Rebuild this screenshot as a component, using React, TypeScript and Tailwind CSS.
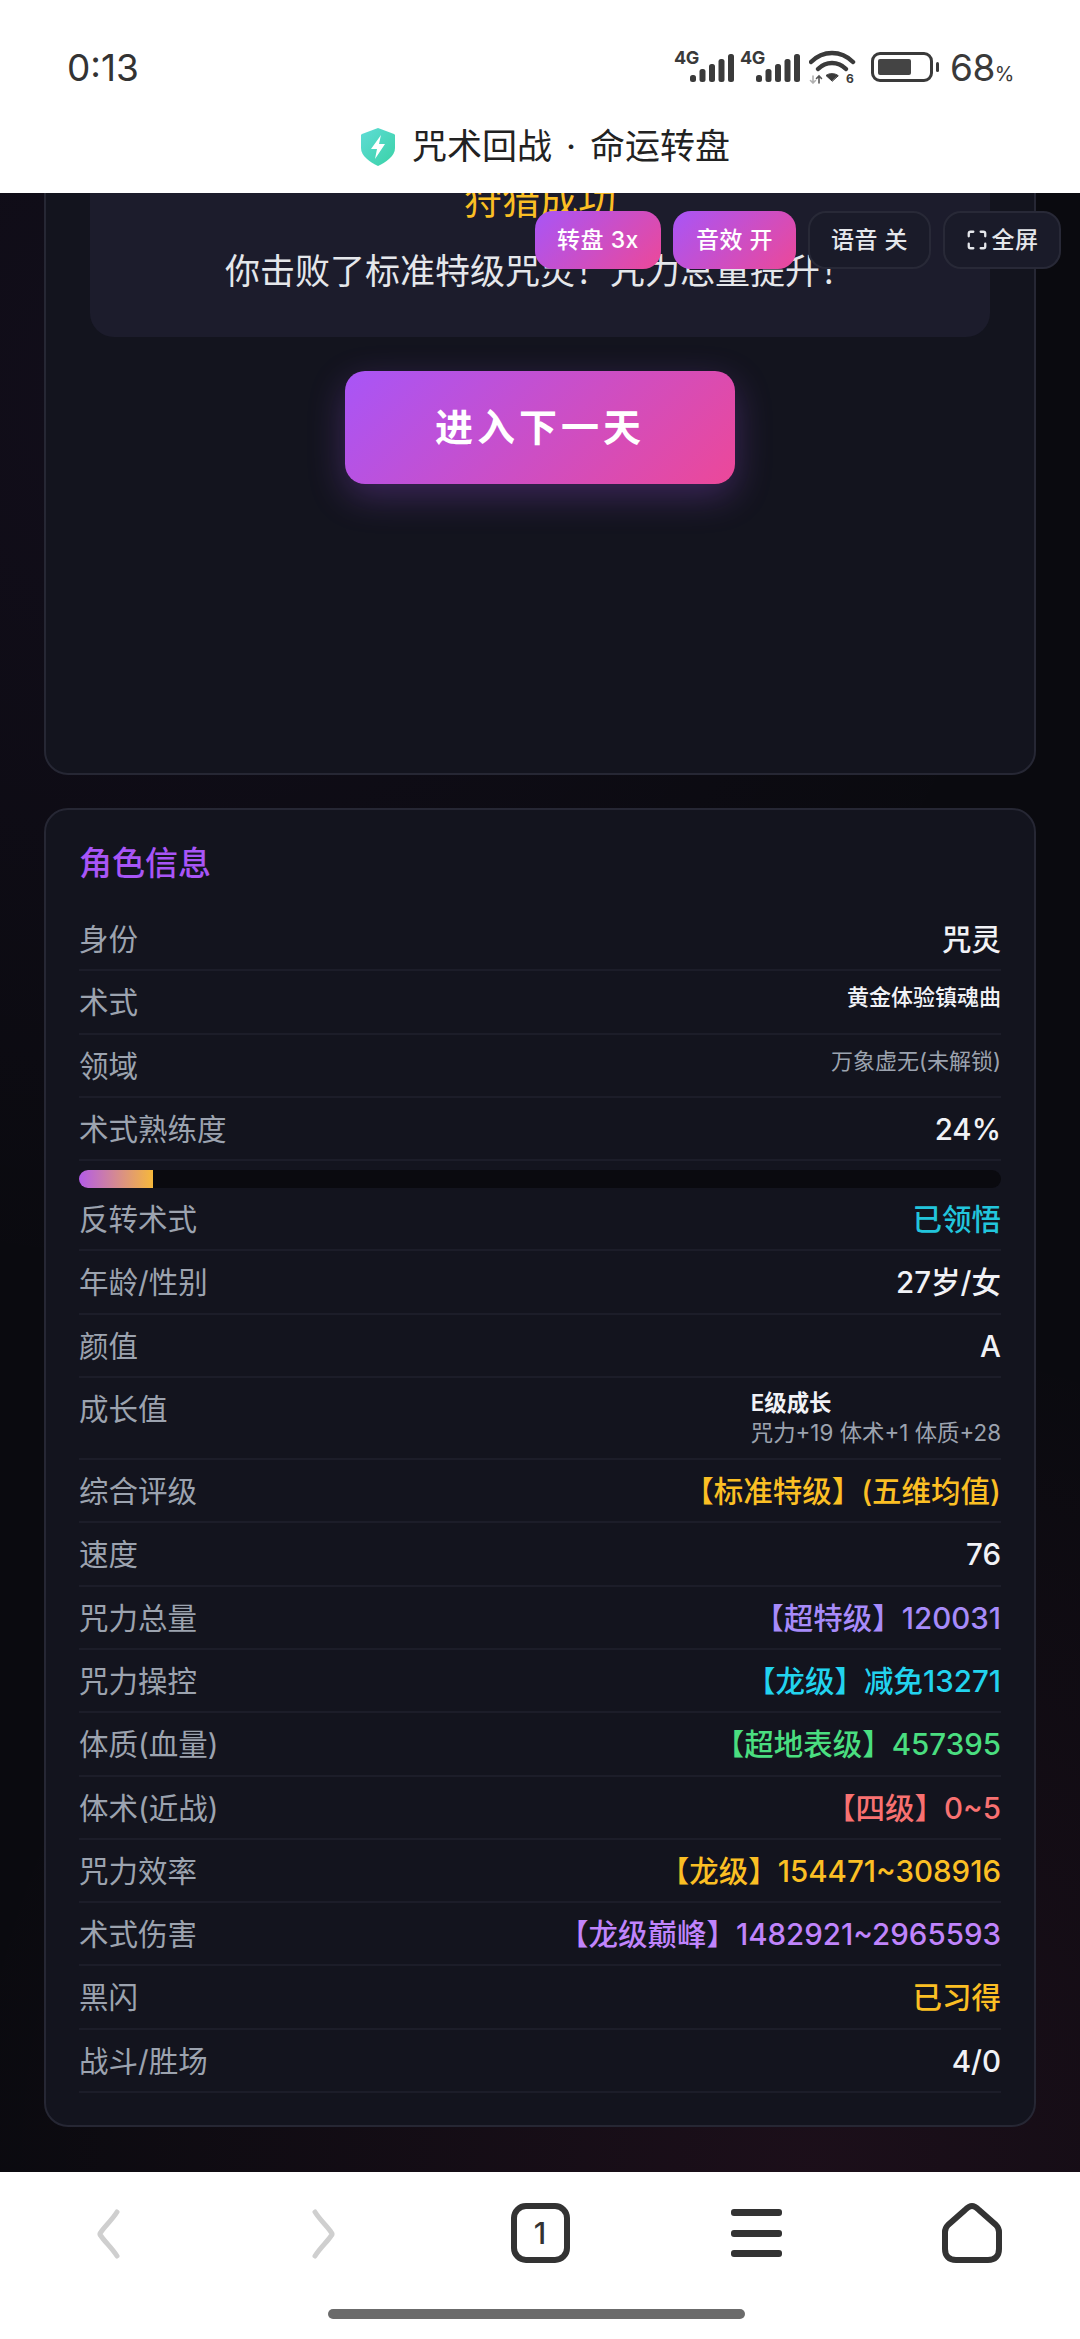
import React from "react";
import { Maximize } from "lucide-react";

type Row = { label: string; value: string; color?: string; size?: string };

const rowsA: Row[] = [
  { label: "身份", value: "咒灵" },
  { label: "术式", value: "黄金体验镇魂曲", size: "text-[22px]" },
  { label: "领域", value: "万象虚无(未解锁)", size: "text-[22px]", color: "text-[#9ca3af] font-normal" },
  { label: "术式熟练度", value: "24%" },
];
const rowsB: Row[] = [
  { label: "反转术式", value: "已领悟", color: "text-[#22c5dc]" },
  { label: "年龄/性别", value: "27岁/女" },
  { label: "颜值", value: "A" },
];
const rowsC: Row[] = [
  { label: "综合评级", value: "【标准特级】(五维均值)", color: "text-[#fbbf24]" },
  { label: "速度", value: "76" },
  { label: "咒力总量", value: "【超特级】120031", color: "text-[#a78bfa]" },
  { label: "咒力操控", value: "【龙级】减免13271", color: "text-[#22d3ee]" },
  { label: "体质(血量)", value: "【超地表级】457395", color: "text-[#4ade80]" },
  { label: "体术(近战)", value: "【四级】0~5", color: "text-[#f87171]" },
  { label: "咒力效率", value: "【龙级】154471~308916", color: "text-[#fbbf24]" },
  { label: "术式伤害", value: "【龙级巅峰】1482921~2965593", color: "text-[#c084fc]" },
  { label: "黑闪", value: "已习得", color: "text-[#fbbf24]" },
  { label: "战斗/胜场", value: "4/0" },
];

function InfoRow({ label, value, color, size }: Row) {
  return (
    <div className="flex items-start justify-between border-b-2 border-[#1c1d29] py-[10px] h-[63.3px]">
      <span className="text-[29.5px] leading-[42px] text-[#9ca3af]">{label}</span>
      <span className={`${size ?? "text-[29.5px] leading-[42px]"} ${size ? "leading-[33px]" : ""} font-medium ${color ?? "text-[#f1f2f6]"}`}>
        {value}
      </span>
    </div>
  );
}

function Bars() {
  return (
    <svg width="44" height="28" viewBox="0 0 44 28" className="absolute left-[16px] top-[3px]" fill="#3a3a3a">
      <rect x="0" y="21" width="6" height="7" rx="2.5" />
      <rect x="9.5" y="15" width="6" height="13" rx="2.5" />
      <rect x="19" y="10" width="6" height="18" rx="2.5" />
      <rect x="28.5" y="5" width="6" height="23" rx="2.5" />
      <rect x="38" y="0" width="6" height="28" rx="2.5" />
    </svg>
  );
}

function Signal() {
  return (
    <div className="relative w-[60px] h-[32px]">
      <span className="absolute left-0 -top-[3px] text-[18px] leading-[20px] font-bold text-[#3a3a3a] tracking-[-0.5px]">4G</span>
      <Bars />
    </div>
  );
}

function TopButton({ active, children, w }: { active?: boolean; children: React.ReactNode; w: string }) {
  return (
    <div
      className={`${w} h-[58px] rounded-[18px] flex items-center justify-center gap-[4px] text-[23px] font-medium tracking-[0.5px] ${
        active
          ? "bg-[linear-gradient(135deg,#a855f7,#ec4899)] text-white"
          : "bg-[#1a1b29] border-2 border-[#282937] text-[#e5e7eb]"
      }`}
    >
      {children}
    </div>
  );
}

export default function App() {
  return (
    <div className="relative w-[1080px] h-[2339px] flex flex-col overflow-hidden bg-white font-['Inter','Noto_Sans_CJK_SC',sans-serif]">
      {/* browser header */}
      <header className="h-[193px] shrink-0 bg-white flex flex-col">
        <div className="h-[127px] flex justify-between pl-[67px] pr-[66px] pt-[45px]">
          <span className="text-[37px] leading-[46px] text-[#333]">0:13</span>
          <div className="flex items-start pt-[6px] gap-[6px]">
            <Signal />
            <Signal />
            <svg width="48" height="34" viewBox="0 0 48 34" className="ml-[3px] -mt-[1px]" fill="none" stroke="#3a3a3a" strokeLinecap="round">
              <path d="M2 12 C14 0 32 0 44 12" strokeWidth="4.5" />
              <path d="M9 19 C17 11 29 11 37 19" strokeWidth="4.5" />
              <path d="M23 31 L17 25.5 C20 23 26 23 29 25.5 Z" fill="#3a3a3a" strokeWidth="1" />
              <path d="M4 26 V33 M1.5 30.5 L4 33 L6.5 30.5" stroke="#b0b0b0" strokeWidth="1.6" />
              <path d="M10 33 V26 M7.5 28.5 L10 26 L12.5 28.5" stroke="#555" strokeWidth="1.6" />
              <text x="37" y="33" fontSize="12" fontWeight="700" fill="#3a3a3a" stroke="none">6</text>
            </svg>
            <div className="ml-[8px] flex items-center gap-[3px] mt-[1px]">
              <div className="w-[62px] h-[30px] rounded-[9px] border-[3px] border-[#3a3a3a] p-[4px]">
                <div className="h-full w-[33px] bg-[#444] rounded-[2px]" />
              </div>
              <div className="w-[3px] h-[10px] bg-[#3a3a3a] rounded-[2px]" />
            </div>
            <span className="ml-[5px] -mt-[6px] text-[37px] leading-[46px] text-[#3a3a3a] tracking-[-0.5px]">
              68<span className="text-[20px]">%</span>
            </span>
          </div>
        </div>
        <div className="flex items-center justify-center gap-[17px] h-[39px] pl-[11px]">
          <svg width="34" height="38" viewBox="0 0 34 38">
            <defs>
              <linearGradient id="sh" x1="0" y1="0" x2="1" y2="1">
                <stop offset="0" stopColor="#5fdcd6" />
                <stop offset="1" stopColor="#3ad2a6" />
              </linearGradient>
            </defs>
            <path d="M17 0 L33 6 C34 6.5 34 7 34 8 V20 C34 28 25 34 17 38 C9 34 0 28 0 20 V8 C0 7 0 6.5 1 6 Z" fill="url(#sh)" />
            <path d="M20 7 L10 21 H16 L14 31 L24 16 H18 Z" fill="#fff" />
          </svg>
          <span className="text-[35px] leading-[39px] text-[#222]">
            咒术回战<span className="mx-[14px]">·</span>命运转盘
          </span>
        </div>
      </header>

      {/* page */}
      <main className="flex-1 min-h-0 overflow-hidden px-[44px] bg-[#0a0a0f] bg-[radial-gradient(circle_at_15%_10%,rgba(168,85,247,0.05),transparent_45%),radial-gradient(circle_at_75%_100%,rgba(236,72,153,0.08),transparent_40%)]">
        <section className="-mt-[60px] rounded-[24px] border-2 border-[#262734] bg-[#13141e] px-[44px] pt-[10px] pb-[289px]">
          <div className="rounded-[24px] bg-[#1c1c2c] pt-[27px] pb-[40px] flex flex-col items-center gap-[16px]">
            <div className="text-[38px] leading-[57px] text-[#fbbf24]">狩猎成功</div>
            <div className="text-[35px] leading-[52px] text-[#e5e7eb]">你击败了标准特级咒灵！咒力总量提升！</div>
          </div>
          <div className="mt-[34px] flex justify-center">
            <button className="w-[390px] h-[113px] rounded-[20px] bg-[linear-gradient(135deg,#a855f7,#ec4899)] text-white text-[38px] font-bold tracking-[4px] shadow-[0_12px_36px_rgba(168,85,247,0.28)]">
              进入下一天
            </button>
          </div>
        </section>

        <section className="mt-[33px] h-[1319px] rounded-[24px] border-2 border-[#262734] bg-[#13141e] px-[33px] pt-[31px]">
          <h2 className="text-[33px] leading-[44px] font-medium text-[#a855f7] mb-[23px]">角色信息</h2>
          {rowsA.map((r) => (
            <InfoRow key={r.label} {...r} />
          ))}
          <div className="mt-[9px] h-[18px] rounded-full bg-[#0a0a0f] overflow-hidden">
            <div className="h-full w-[74px] bg-[linear-gradient(90deg,#b35be8,#f6b83b)]" />
          </div>
          {rowsB.map((r) => (
            <InfoRow key={r.label} {...r} />
          ))}
          <div className="flex items-start justify-between border-b-2 border-[#1c1d29] pt-[10px] h-[82px]">
            <span className="text-[29.5px] leading-[42px] text-[#9ca3af]">成长值</span>
            <div className="text-[22.4px] leading-[30px]">
              <div className="font-semibold text-[#f1f2f6]">E级成长</div>
              <div className="text-[#9ca3af]">咒力+19 体术+1 体质+28</div>
            </div>
          </div>
          {rowsC.map((r) => (
            <InfoRow key={r.label} {...r} />
          ))}
        </section>
      </main>

      {/* floating controls */}
      <div className="absolute top-[211px] right-[19px] flex gap-[12px]">
        <TopButton active w="w-[126px]">转盘 3x</TopButton>
        <TopButton active w="w-[123px]">音效 开</TopButton>
        <TopButton w="w-[123px]">语音 关</TopButton>
        <TopButton w="w-[118px]">
          <Maximize size={22} strokeWidth={2.5} />
          全屏
        </TopButton>
      </div>

      {/* browser nav */}
      <footer className="h-[167px] shrink-0 bg-white flex flex-col items-center">
        <div className="w-full grid grid-cols-5 justify-items-center pt-[37px] h-[137px]">
          <svg width="24" height="50" viewBox="0 0 24 50" fill="none" stroke="#cfcfcf" strokeWidth="5" strokeLinecap="round" strokeLinejoin="round">
            <path d="M21 3 C16 11 9 17 5 23 Q3 25 5 27 C9 33 16 39 21 47" />
          </svg>
          <svg width="24" height="50" viewBox="0 0 24 50" fill="none" stroke="#cfcfcf" strokeWidth="5" strokeLinecap="round" strokeLinejoin="round">
            <path d="M3 3 C8 11 15 17 19 23 Q21 25 19 27 C15 33 8 39 3 47" />
          </svg>
          <div className="w-[59px] h-[60px] -mt-[6px] rounded-[15px] border-[6px] border-[#333] flex items-center justify-center text-[30px] font-medium leading-none text-[#333]">
            1
          </div>
          <div className="w-[51px] h-[48px] flex flex-col justify-between">
            <div className="h-[7px] rounded-[3px] bg-[#333]" />
            <div className="h-[7px] rounded-[3px] bg-[#333]" />
            <div className="h-[7px] rounded-[3px] bg-[#333]" />
          </div>
          <svg width="60" height="60" viewBox="0 0 60 60" className="-mt-[6px]" fill="none" stroke="#333" strokeWidth="6" strokeLinejoin="round">
            <path d="M30 3 C27 3 25 5 23 7 L6 22 C4 24 3 26 3 29 V46 C3 53 7 57 14 57 H46 C53 57 57 53 57 46 V29 C57 26 56 24 54 22 L37 7 C35 5 33 3 30 3 Z" />
          </svg>
        </div>
        <div className="w-[417px] h-[10px] rounded-full bg-[#6b6b6b] mr-[7px]" />
      </footer>
    </div>
  );
}
